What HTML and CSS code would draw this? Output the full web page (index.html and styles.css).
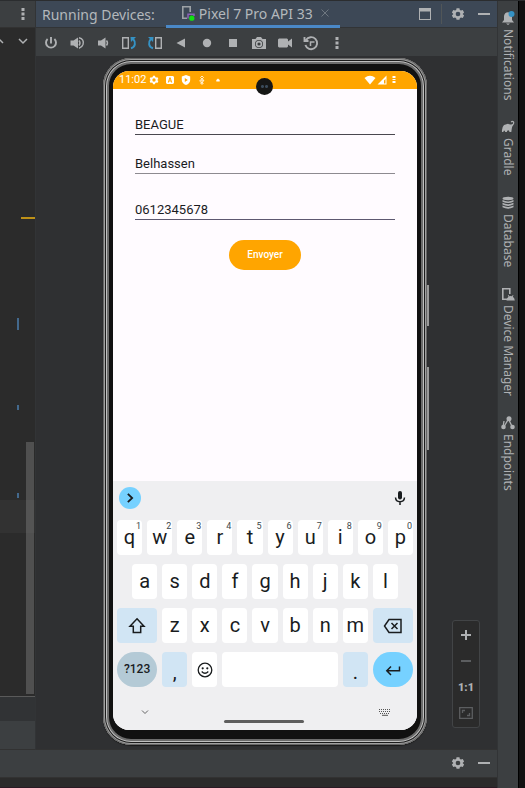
FILE: index.html
```html
<!DOCTYPE html>
<html lang="en">
<head>
<meta charset="utf-8">
<title>Running Devices</title>
<link rel="stylesheet" href="styles.css">
</head>
<body>
<svg class="sprite" aria-hidden="true">
  <symbol id="gear" viewBox="0 0 24 24"><path fill="currentColor" fill-rule="evenodd" d="M9.500 2h5l.6 3 2 1.200 3-1 2.400 4.300-2.300 2v1.100l2.300 2-2.400 4.300-3-1-2 1.200-.6 2.900h-5l-.6-2.900-2-1.200-3 1-2.400-4.300 2.300-2v-1.100l-2.300-2 2.400-4.300 3 1 2-1.200zM12 8a4 4 0 1 0 0 8 4 4 0 0 0 0-8z"/></symbol>
  <symbol id="dots" viewBox="0 0 16 16"><g fill="currentColor"><rect x="6.500" y="2" width="3" height="3"/><rect x="6.500" y="6.500" width="3" height="3"/><rect x="6.500" y="11" width="3" height="3"/></g></symbol>
  <symbol id="minus" viewBox="0 0 16 16"><path fill="currentColor" d="M2 7h12v2H2z"/></symbol>
</svg>
<div class="ide">
  <div class="workspace">
    <div class="upper">
      <aside class="editor">
        <header class="editor-head"><button class="tool" aria-label="Editor options"><svg class="i16"><use href="#dots"/></svg></button></header>
        <div class="editor-body">
          <div class="editor-nav">
            <button class="tool" aria-label="Previous"><svg class="i16" viewBox="0 0 16 16"><path d="M4 10l4-4 4 4" fill="none" stroke="currentColor" stroke-width="1.500"/></svg></button>
            <button class="tool" aria-label="Next"><svg class="i16" viewBox="0 0 16 16"><path d="M4 6l4 4 4-4" fill="none" stroke="currentColor" stroke-width="1.500"/></svg></button>
          </div>
          <span class="caret-row"></span>
          <span class="mark warn"></span>
          <span class="mark change long"></span>
          <span class="mark change second"></span>
          <span class="mark change third"></span>
          <span class="thumb"></span>
        </div>
        <div class="editor-crumbs"></div>
        <div class="editor-foot"></div>
      </aside>
      <main class="devices">
        <header class="title-bar">
          <h1>Running Devices:</h1>
          <div class="tab">
            <svg class="i16" viewBox="0 0 16 16"><path d="M7 13.200H2.800V1.800h7.400V7" fill="none" stroke="#9da2a6" stroke-width="1.600"/><path d="M8 13.500V9.200h6V11" fill="none" stroke="#8c62b8" stroke-width="1.500"/><circle cx="11.800" cy="13.200" r="2.600" fill="#12e012"/></svg>
            <span>Pixel 7 Pro API 33</span>
            <button class="close" aria-label="Close tab"><svg viewBox="0 0 8 8"><path d="M0.500 0.500l7 7M7.500 0.500l-7 7" stroke="currentColor" fill="none"/></svg></button>
          </div>
          <div class="title-actions">
            <button class="tool" aria-label="Window"><svg class="i16" viewBox="0 0 16 16"><path fill="currentColor" fill-rule="evenodd" d="M2 2h12v12H2zM3 5.500v7.500h10V5.500z"/></svg></button>
            <span class="divider"></span>
            <button class="tool" aria-label="Settings"><svg class="i14"><use href="#gear"/></svg></button>
            <button class="tool" aria-label="Hide"><svg class="i16"><use href="#minus"/></svg></button>
          </div>
        </header>
        <nav class="toolbar">
          <button class="tool" aria-label="Power"><svg class="i16" viewBox="0 0 16 16"><path d="M8 2v6.500M4.600 4a5 5 0 1 0 6.800 0" fill="none" stroke="currentColor" stroke-width="1.900"/></svg></button>
          <button class="tool" aria-label="Volume up"><svg class="i16" viewBox="0 0 16 16"><path fill="currentColor" d="M1.500 5.500h3L9 2.500v11l-4.500-3h-3z"/><path d="M10 5.500q2 2.500 0 5M10 2.800q5.500 1.500 4 6.700-1 3-4 3.700" fill="none" stroke="currentColor" stroke-width="1.400"/></svg></button>
          <button class="tool" aria-label="Volume down"><svg class="i16" viewBox="0 0 16 16"><path fill="currentColor" d="M3 5.500h3l4.500-3v11l-4.500-3H3z"/><path d="M11.500 5.500q2 2.500 0 5" fill="none" stroke="currentColor" stroke-width="1.400"/></svg></button>
          <button class="tool" aria-label="Rotate left"><svg class="i16" viewBox="0 0 16 16"><path d="M1.700 2.700h5.600v10.600H1.700z" fill="none" stroke="currentColor" stroke-width="1.400"/><path d="M10 13.200c4.500-1 5-6 2-9.500" fill="none" stroke="#3592c4" stroke-width="2"/><path d="M9.500 2H15L10 7z" fill="#3592c4"/></svg></button>
          <button class="tool" aria-label="Rotate right"><svg class="i16" viewBox="0 0 16 16"><path d="M8.700 2.700h5.600v10.600H8.700z" fill="none" stroke="currentColor" stroke-width="1.400"/><path d="M6 13.200c-4.500-1-5-6-2-9.500" fill="none" stroke="#3592c4" stroke-width="2"/><path d="M6.500 2H1L6 7z" fill="#3592c4"/></svg></button>
          <button class="tool" aria-label="Back"><svg class="i16" viewBox="0 0 16 16"><path fill="currentColor" d="M3.500 8L12 3.500v9z"/></svg></button>
          <button class="tool" aria-label="Home"><svg class="i16" viewBox="0 0 16 16"><circle cx="8" cy="8" r="4.200" fill="currentColor"/></svg></button>
          <button class="tool" aria-label="Overview"><svg class="i16" viewBox="0 0 16 16"><path fill="currentColor" d="M4 4h8v8H4z"/></svg></button>
          <button class="tool" aria-label="Screenshot"><svg class="i16" viewBox="0 0 16 16"><path fill="currentColor" fill-rule="evenodd" d="M1 4h3.500L6 2h4l1.500 2H15v10H1zM8 5a4 4 0 1 0 0 8 4 4 0 0 0 0-8z"/><circle cx="8" cy="9" r="2.400" fill="none" stroke="currentColor" stroke-width="1.600"/></svg></button>
          <button class="tool" aria-label="Record"><svg class="i16" viewBox="0 0 16 16"><path fill="currentColor" d="M2 3.500h8l1 1v2l4-3v9l-4-3v2l-1 1H2l-1-1v-7z"/></svg></button>
          <button class="tool" aria-label="Snapshots"><svg class="i16" viewBox="0 0 16 16"><path d="M3 5a6 6 0 1 1-.6 5M1.500 2v4h4" fill="none" stroke="currentColor" stroke-width="1.900"/><path d="M7.500 11V7h4" fill="none" stroke="currentColor" stroke-width="1.500"/></svg></button>
          <button class="tool" aria-label="More"><svg class="i16"><use href="#dots"/></svg></button>
        </nav>
        <section class="stage">
          <div class="phone">
            <span class="side power-key"></span>
            <span class="side volume-key"></span>
            <div class="screen">
              <div class="status">
                <span class="clock">11:02</span>
                <span class="status-icons">
                  <svg viewBox="0 0 24 24"><use href="#gear"/></svg>
                  <svg viewBox="0 0 10 10"><path fill="currentColor" fill-rule="evenodd" d="M2 1h6l1 1v6L8 9H2L1 8V2zM4.400 2.500L2.800 7.500h1l.3-1h1.800l.3 1h1L5.600 2.500zM5 3.800l.6 1.800H4.400z"/></svg>
                  <svg viewBox="0 0 10 10"><path fill="currentColor" fill-rule="evenodd" d="M5 0l4.200 1.500V5Q9 8.500 5 10 1 8.500.8 5V1.500zM3.800 3v4l3-2z"/></svg>
                  <svg viewBox="0 0 10 10"><path d="M5 1l1.500 1.500L5 4 3.500 2.500zM5 4v5M3 5h4L5 8 3 6.500zM3.500 8L5 9.500 6.500 8" fill="none" stroke="currentColor" stroke-width=".8"/></svg>
                  <svg viewBox="0 0 10 10"><path fill="currentColor" d="M5 3.500L6.700 5v1.500H3.300V5z"/></svg>
                </span>
                <span class="signal">
                  <svg class="wifi" viewBox="0 0 12 10"><path fill="currentColor" d="M.5 3Q6-1.500 11.500 3L6 9.500z"/></svg>
                  <svg class="cell" viewBox="0 0 10 10"><path fill="currentColor" fill-rule="evenodd" d="M9.500.5v9H.5zM7 5.500v3h1.500V4z"/></svg>
                  <svg class="battery" viewBox="0 0 6 10"><path fill="currentColor" d="M1.500 1h3v2h-3zM1.500 4h3v1h-3zM1.500 6h3v2h-3z"/></svg>
                </span>
                <span class="camera"></span>
              </div>
              <form class="form" onsubmit="return false">
                <input class="field" type="text" aria-label="Nom" value="BEAGUE">
                <input class="field soft" type="text" aria-label="Prénom" value="Belhassen">
                <input class="field spaced" type="tel" aria-label="Téléphone" value="0612345678">
                <button class="send">Envoyer</button>
              </form>
              <div class="keyboard">
                <div class="suggest">
                  <button class="expand" aria-label="Expand"><svg viewBox="0 0 10 10"><path d="M3.200 1.500L6.800 5 3.200 8.500" fill="none" stroke="currentColor" stroke-width="1.500"/></svg></button>
                  <button class="mic" aria-label="Voice input"><svg viewBox="0 0 12 16"><rect x="4" y="1" width="4" height="8.500" rx="2" fill="currentColor"/><path d="M1.500 7.500q.3 4.200 4.500 4.200t4.500-4.200M6 11.500V15" fill="none" stroke="currentColor" stroke-width="1.500"/></svg></button>
                </div>
                <div class="keys">
                  <button class="key">q<sup>1</sup></button><button class="key">w<sup>2</sup></button><button class="key">e<sup>3</sup></button><button class="key">r<sup>4</sup></button><button class="key">t<sup>5</sup></button><button class="key">y<sup>6</sup></button><button class="key">u<sup>7</sup></button><button class="key">i<sup>8</sup></button><button class="key">o<sup>9</sup></button><button class="key">p<sup>0</sup></button>
                  <button class="key indent">a</button><button class="key">s</button><button class="key">d</button><button class="key">f</button><button class="key">g</button><button class="key">h</button><button class="key">j</button><button class="key">k</button><button class="key">l</button>
                  <button class="key wide tint first" aria-label="Shift"><svg viewBox="0 0 18 18"><path d="M9 1.800L16 9.300h-3.300v6.200H5.300V9.300H2z" fill="none" stroke="currentColor" stroke-width="1.500"/></svg></button><button class="key">z</button><button class="key">x</button><button class="key">c</button><button class="key">v</button><button class="key">b</button><button class="key">n</button><button class="key">m</button><button class="key wide tint" aria-label="Backspace"><svg class="back" viewBox="0 0 20 16"><path d="M6 1.500h12v13H6L1.500 8zM8.500 5l6 6M14.500 5l-6 6" fill="none" stroke="currentColor" stroke-width="1.500"/></svg></button>
                  <button class="key wide symbols">?123</button><button class="key tint mark-key">,</button><button class="key" aria-label="Emoji"><svg class="emoji" viewBox="0 0 16 16"><circle cx="8" cy="8" r="6.800" fill="none" stroke="currentColor" stroke-width="1.300"/><circle cx="5.700" cy="6.300" r="1.100" fill="currentColor"/><circle cx="10.300" cy="6.300" r="1.100" fill="currentColor"/><path d="M4.700 9.500Q8 13 11.300 9.500" fill="none" stroke="currentColor" stroke-width="1.300"/></svg></button><button class="key space" aria-label="Space"></button><button class="key tint mark-key">.</button><button class="key wide enter" aria-label="Enter"><svg viewBox="0 0 18 18"><path d="M15.500 5.500v4.300H3M7 5.500L2.800 9.800 7 14" fill="none" stroke="currentColor" stroke-width="1.500"/></svg></button>
                </div>
                <div class="gesture">
                  <svg class="down" viewBox="0 0 8 8"><path d="M1 2.500l3 3 3-3" fill="none" stroke="currentColor" stroke-width=".9"/></svg>
                  <span class="pill"></span>
                  <svg class="kbd" viewBox="0 0 12 8"><path d="M0 1.500h12M0 3.500h12" stroke="currentColor" stroke-dasharray="1 1"/><path d="M1 5.500h10" stroke="currentColor" stroke-dasharray="1 1"/><path d="M3 7.300h6" stroke="currentColor"/></svg>
                </div>
              </div>
            </div>
          </div>
          <div class="zoom">
            <button class="tool" aria-label="Zoom in"><svg class="i16" viewBox="0 0 16 16"><path fill="currentColor" d="M3 7h4V3h2v4h4v2H9v4H7V9H3z"/></svg></button>
            <button class="tool dim" aria-label="Zoom out"><svg class="i16" viewBox="0 0 16 16"><path fill="currentColor" d="M3 7h10v2H3z"/></svg></button>
            <button class="tool ratio">1:1</button>
            <button class="tool dim" aria-label="Fit"><svg class="i16" viewBox="0 0 16 16"><path d="M1.700 2.700h12.600v10.600H1.700zM4.500 8V5.500H7M11.500 8v2.500H9" fill="none" stroke="currentColor" stroke-width="1.300"/></svg></button>
          </div>
        </section>
      </main>
    </div>
    <div class="bottom-bar">
      <button class="tool" aria-label="Settings"><svg class="i14"><use href="#gear"/></svg></button>
      <button class="tool" aria-label="Hide"><svg class="i16"><use href="#minus"/></svg></button>
    </div>
    <div class="console"></div>
  </div>
  <nav class="strip">
    <button class="strip-item"><svg class="i14" viewBox="0 0 14 14"><path fill="currentColor" d="M1 11.500L3 9V5q.5-3.500 4-3.800Q10.500 1.500 11 5v4l2 2.500zM5 12.500h4L7 14z"/><circle cx="10.500" cy="3" r="3" fill="#3592c4"/></svg><span>Notifications</span></button>
    <button class="strip-item"><svg class="i14" viewBox="0 0 14 14"><path fill="currentColor" d="M1 12q-.5-4.500 2-7l4-1.200q2 1.200 4 .4 1.800-1 .8-2-.7-.5-1.300.3l-.8-.7Q11-.2 13 1.500q1 2-1 4-1 .9-1.200 3L10.300 12H8.500q-.2-1.700-1.300-1.700T5.800 12H4.200q-.2-1.500-1-1.500T2.400 12z"/></svg><span>Gradle</span></button>
    <button class="strip-item"><svg class="i14" viewBox="0 0 14 14"><g fill="currentColor"><ellipse cx="7" cy="2.500" rx="5.500" ry="1.700"/><path d="M1.500 4Q7 6.800 12.500 4v1.700Q7 8.500 1.500 5.700zM1.500 6.800Q7 9.600 12.500 6.800v1.700Q7 11.300 1.500 8.500zM1.500 9.600q5.500 2.800 11 0v1.700q-5.500 2.800-11 0z"/></g></svg><span>Database</span></button>
    <button class="strip-item"><svg class="i14" viewBox="0 0 14 14"><path d="M6 12.200H1.800V1.800h7V7" fill="none" stroke="currentColor" stroke-width="1.600"/><path fill="currentColor" d="M5.500 13.500q.2-2.500 2-3.700L6.800 8.300l.7-.3.8 1.300q1.400-.5 2.700 0l.8-1.300.7.300-.7 1.500q1.800 1.200 2 3.700z"/></svg><span>Device Manager</span></button>
    <button class="strip-item"><svg class="i14" viewBox="0 0 14 14"><path d="M2.500 11.500L7.500 3l4 8.500M3 5l-1 6" fill="none" stroke="currentColor" stroke-width="1.300"/><g fill="currentColor"><circle cx="8" cy="2.800" r="2.500"/><circle cx="2.500" cy="11" r="2.300"/><circle cx="11.500" cy="11" r="2.300"/></g></svg><span>Endpoints</span></button>
  </nav>
</div>
</body>
</html>
```

FILE: styles.css
```css
* { box-sizing: border-box; }
body { margin: 0; background: #111; font-family: "Noto Sans", sans-serif; color: #afb1b3; }
button, input { font: inherit; color: inherit; border: 0; background: none; padding: 0; margin: 0; }
svg { display: block; flex: none; }
.sprite { position: absolute; width: 0; height: 0; }
.i16 { width: 16px; height: 16px; }
.i14 { width: 14px; height: 14px; }

.ide { display: flex; height: 100vh; padding-right: 6px; border-top: 1px solid #2b2d2f; }
.workspace { flex: 1; min-width: 0; display: flex; flex-direction: column; }
.upper { flex: 1; min-height: 0; display: flex; }
.tool { width: 26px; height: 26px; display: flex; flex: none; align-items: center; justify-content: center; }

.editor { width: 36px; flex: none; display: flex; flex-direction: column; background: #2b2b2b; border-right: 1px solid #323436; overflow: hidden; }
.editor-head { display: flex; justify-content: flex-end; height: 27px; background: #3c3f41; border-bottom: 1px solid #323232; }
.editor-body { flex: 1; position: relative; border-bottom: 1px solid #5a5a5a; }
.editor-nav { display: flex; justify-content: flex-end; }
.editor-nav .tool:first-child { width: 20px; }
.editor-nav .tool:first-child svg { margin-left: -4px; }
.editor-head .tool, .editor-nav .tool:last-child { width: 24px; }
.editor-crumbs { height: 24px; background: #313335; }
.editor-foot { height: 29px; background: #3c3f41; border-bottom: 1px solid #323232; }
.mark, .thumb, .caret-row { position: absolute; }
.warn { right: 0; top: 189px; width: 14px; height: 2px; background: #be9117; }
.change { right: 16px; width: 2px; height: 5px; background: #43698d; }
.long { top: 290px; height: 12px; }
.second { top: 377px; }
.third { top: 465px; }
.caret-row { left: 0; right: 0; top: 472px; height: 33px; background: #323232; }
.thumb { right: 1px; top: 414px; bottom: 2px; width: 8px; background: #a6a6a64d; }

.devices { flex: 1; min-width: 0; display: flex; flex-direction: column; background: #2f3032; }
.title-bar { display: flex; height: 27px; background: #3d4856; border-bottom: 1px solid #323436; font-size: 14px; }
h1 { margin: 0; padding: 0 11px 0 6px; font-size: 14px; font-weight: 400; line-height: 27px; }
.tab { display: flex; align-items: center; gap: 3px; padding: 0 11px 0 14px; border-bottom: 3px solid #4a88c7; line-height: 27px; margin-bottom: -1px; white-space: nowrap; }
h1, .tab { color: #b4b8bc; }
.close { margin-left: 5px; color: #6e7780; }
.close svg { width: 8px; height: 8px; }
.title-actions { display: flex; margin-left: auto; }
.divider { width: 1px; margin: 3px; background: #515658; }
.toolbar { display: flex; align-items: flex-end; height: 28px; padding-left: 2px; background: #3c3f41; }
.stage { position: relative; flex: 1; min-height: 0; display: flex; justify-content: center; padding: 2px 3px 4px 0; border-bottom: 1px solid #323232; }

.phone { position: relative; height: 100%; aspect-ratio: 324 / 687; padding: 13px 10px 15px; border-radius: 28px; background: #111;
  box-shadow: inset 0 0 0 1px #666, inset 0 0 0 2px #a0a0a0, inset 0 0 0 3px #1c1c1c, inset 0 0 0 4px #c0c0c0, inset 0 0 0 6px #6c6c6c, 0 1px 1px #1a1a1a; }
.side { position: absolute; left: 100%; width: 2px; background: #9a9a9a; }
.power-key { top: 33%; height: 6%; }
.volume-key { top: 45%; height: 12%; }
.screen { height: 100%; display: flex; flex-direction: column; border-radius: 16px; overflow: hidden; background: #fffbff; font-family: Roboto, sans-serif; color: #1b1b1f; }
.status { position: relative; display: flex; align-items: center; height: 18px; padding: 0 20px 0 6px; background: #ffa500; color: #fff; }
.clock { font-size: 11px; line-height: 18px; }
.status-icons { display: flex; gap: 6px; margin-left: 3px; }
.status-icons svg { width: 10px; height: 10px; }
.signal { display: flex; align-items: center; gap: 1px; margin-left: auto; }
.wifi { width: 12px; height: 10px; }
.cell { width: 10px; height: 10px; }
.battery { width: 6px; height: 10px; margin-left: 3px; }
.camera { position: absolute; left: 50%; top: 7px; width: 17px; height: 17px; margin-left: -9px; border-radius: 50%; background: radial-gradient(circle at 38% 50%, #3a4a5a 0 1px, transparent 2px), radial-gradient(circle at 62% 50%, #3a4a5a 0 1px, transparent 2px), #161616; }

.form { flex: 1; display: flex; flex-direction: column; align-items: center; padding: 22px 22px 0; }
.field { width: 100%; height: 24px; padding-top: 3px; border-bottom: 1px solid #4a474f; border-radius: 0; font-size: 13px; outline: 0; }
.field.soft { margin-top: 15px; border-color: #8d8a90; }
.field.spaced { margin-top: 22px; border-color: #5d5870; }
.send { margin-top: 20px; padding: 0 18px; border-radius: 15px; background: #ffa500; color: #fff; font-size: 10px; font-weight: 500; line-height: 30px; }

.keyboard { background: #efeff1; color: #191c1e; }
.suggest { display: flex; align-items: center; justify-content: space-between; height: 39px; padding: 0 11px 6px 6px; }
.expand { display: flex; align-items: center; justify-content: center; width: 22px; height: 22px; border-radius: 50%; background: #76d1ff; }
.expand svg { width: 12px; height: 12px; }
.mic svg { width: 12px; height: 16px; }
.keys { display: grid; grid-template-columns: repeat(20, minmax(0, 1fr)); grid-auto-rows: 35px; gap: 9px 5px; padding: 0 4px; }
.key { position: relative; grid-column: span 2; display: flex; align-items: center; justify-content: center; border-radius: 4px; background: #fff; font-size: 20px; line-height: 33px; }
.key.indent { grid-column: 2 / span 2; }
.key.wide { grid-column: span 3; }
.key.first { grid-column: 1 / span 3; }
.key.space { grid-column: span 8; }
.key.tint { background: #d1e5f4; }
.key.mark-key { padding-top: 6px; line-height: 29px; }
.key.symbols { border-radius: 18px; background: #b4cad6; font-size: 12px; font-weight: 500; }
.key.enter { border-radius: 18px; background: #76d1ff; }
.key svg { width: 18px; height: 18px; }
.key .back { width: 20px; height: 16px; }
.key .emoji { width: 16px; height: 16px; }
sup { position: absolute; top: 2px; right: 1px; font-size: 9px; line-height: 9px; color: #40484c; }
.gesture { display: flex; align-items: center; justify-content: space-between; height: 43px; padding: 7px 26px 0 28px; color: #555; }
.down { width: 8px; height: 8px; }
.kbd { width: 12px; height: 8px; }
.pill { width: 80px; height: 3px; margin-top: 18px; border-radius: 2px; background: #5e5e5e; }

.zoom { position: absolute; right: 17px; bottom: 21px; padding: 1px 0; border: 1px solid #424446; border-radius: 3px; background: #2b2b2b; }
.dim { color: #5c5e60; }
.ratio { font-family: Roboto, sans-serif; font-size: 11px; font-weight: 900; }

.bottom-bar { display: flex; justify-content: flex-end; height: 27px; background: #3c3f41; }
.console { height: 11px; background: #2b2b2b; border-top: 1px solid #323232; border-bottom: 1px solid #2a1a24; }
.strip { width: 22px; flex: none; display: flex; flex-direction: column; align-items: center; gap: 20px; padding-top: 10px; background: #3c3f41; border-left: 1px solid #323436; border-right: 1px solid #000; overflow: hidden; }
.strip-item { display: flex; flex: none; flex-direction: column; align-items: center; gap: 4px; font-size: 12px; line-height: 18px; }
.strip-item span { writing-mode: vertical-rl; white-space: nowrap; }
```
